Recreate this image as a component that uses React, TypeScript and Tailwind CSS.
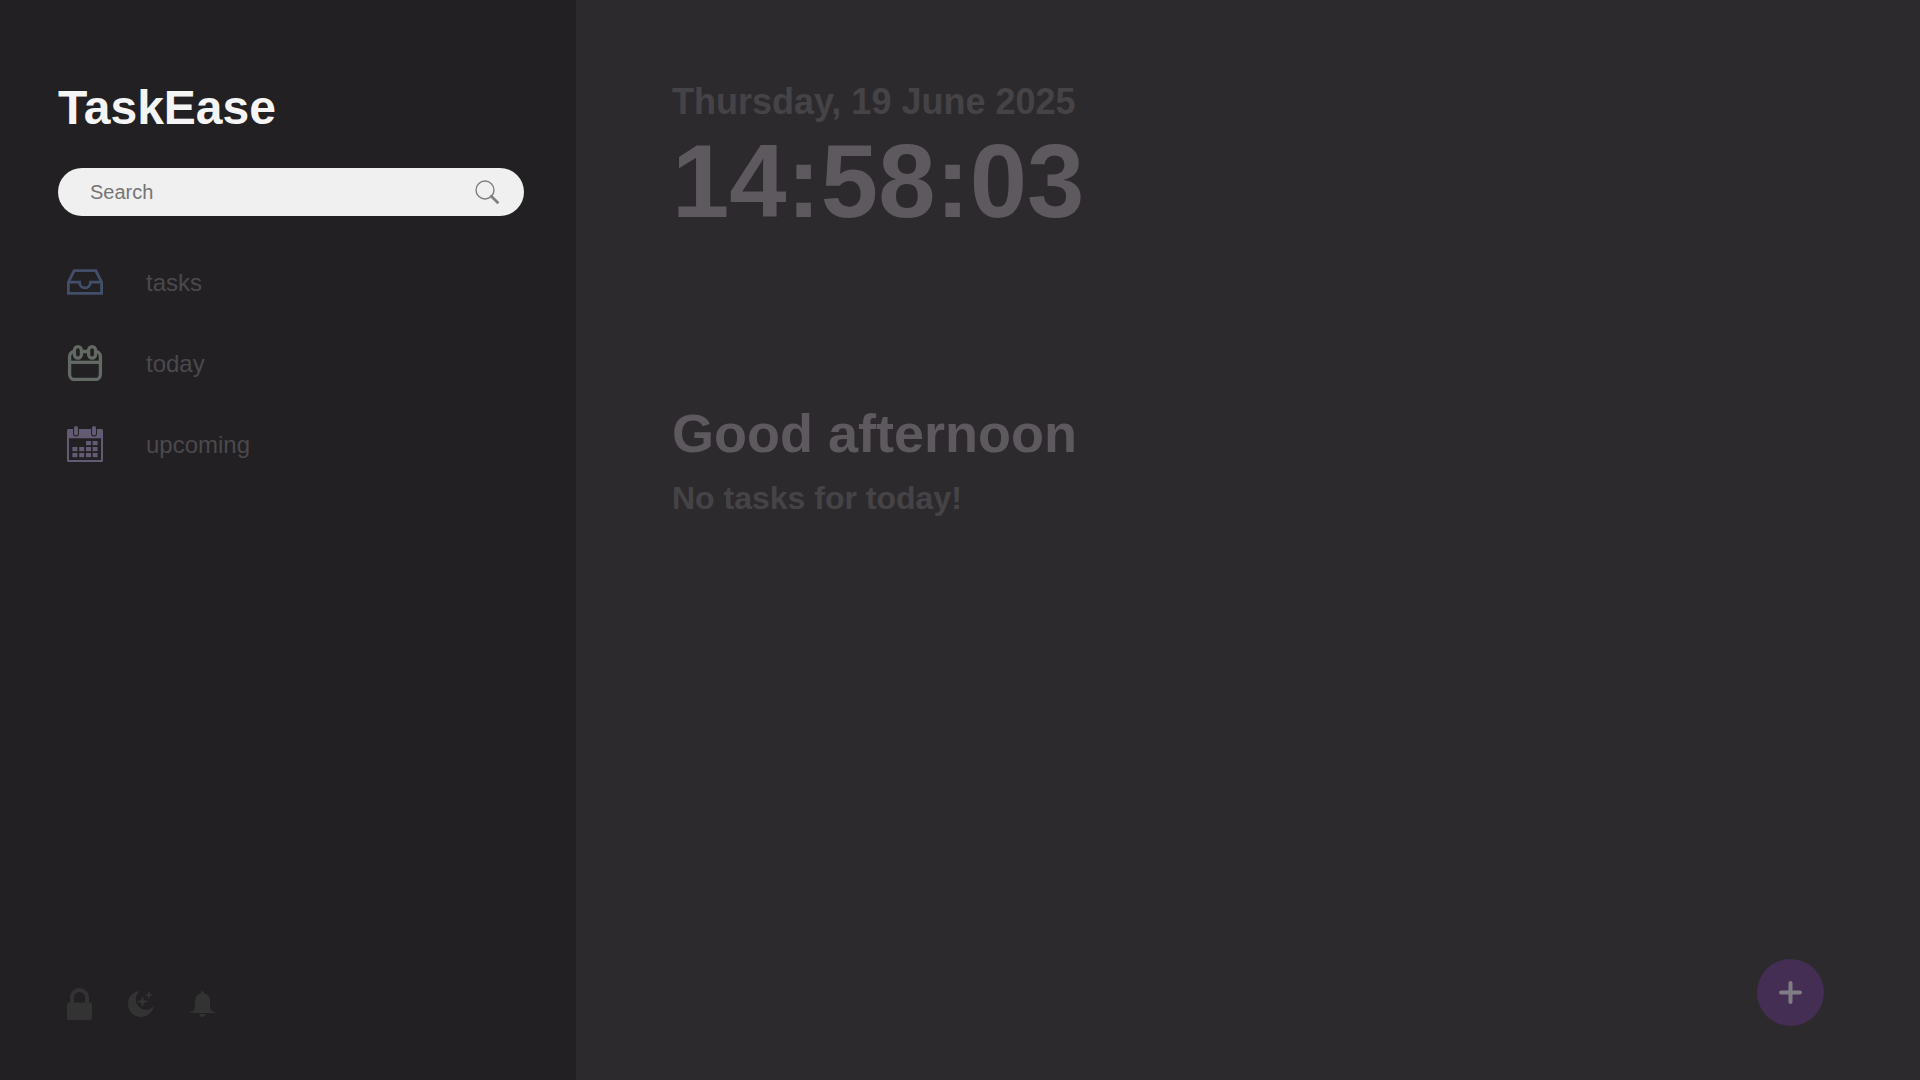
import React from "react";

function TasksIcon() {
  return (
    <svg viewBox="0 0 36 36" className="size-9 text-[#434e69]" fill="none" stroke="currentColor" strokeWidth="2.8" aria-hidden="true">
      <path d="M1.4 29.4V18.2L7.2 6.6H28.8L34.6 18.2V29.4Z" />
      <path d="M1.4 18.2H12.6C12.6 21.6 14.8 23.9 18 23.9S23.4 21.6 23.4 18.2H34.6" />
    </svg>
  );
}

function TodayIcon() {
  return (
    <svg viewBox="0 0 36 36" className="size-9 text-[#626a63]" fill="none" stroke="currentColor" strokeWidth="3.3" aria-hidden="true">
      <rect x="2.6" y="6.5" width="30.8" height="28" rx="5" />
      <path d="M2.6 17.3H33.4" />
      <rect x="7.400" y="1.700" width="7" height="11.400" rx="3.500" fill="#222023" />
      <rect x="21.600" y="1.700" width="7" height="11.400" rx="3.500" fill="#222023" />
    </svg>
  );
}

function UpcomingIcon() {
  const cells = [
    [19, 15], [25.6, 15],
    [5.4, 21], [12.2, 21], [19, 21], [25.6, 21],
    [5.4, 27], [12.2, 27], [19, 27], [25.6, 27],
  ];
  return (
    <svg viewBox="0 0 36 36" className="size-9 text-[#635a73]" fill="currentColor" aria-hidden="true">
      <path fillRule="evenodd" d="M1.5 3H34.5Q36 3 36 4.5V34.5Q36 36 34.5 36H1.5Q0 36 0 34.5V4.5Q0 3 1.5 3ZM2 12.2V34H34V12.2Z" />
      <rect x="6" y="-1" width="6" height="11.4" rx="3" fill="#222023" />
      <rect x="24" y="-1" width="6" height="11.4" rx="3" fill="#222023" />
      <rect x="7" y="0" width="4" height="9.4" rx="2" />
      <rect x="25" y="0" width="4" height="9.4" rx="2" />
      {cells.map(([x, y]) => (
        <rect key={`${x}-${y}`} x={x} y={y} width="5" height="4.2" />
      ))}
    </svg>
  );
}

function SearchIcon() {
  return (
    <svg viewBox="0 0 24 24" className="size-6" fill="none" stroke="#7f7f7f" aria-hidden="true">
      <circle cx="10" cy="10" r="9" strokeWidth="1.4" />
      <path d="M16.3 16.3L22.6 22.4" strokeWidth="2.8" strokeLinecap="round" />
    </svg>
  );
}

function LockIcon() {
  return (
    <svg viewBox="0 0 25 32" className="h-8 w-[25px]" aria-hidden="true">
      <path d="M5 16V9.3A7.5 7.3 0 0 1 20 9.3V16" fill="none" stroke="currentColor" strokeWidth="4" />
      <rect y="14.4" width="25" height="17.6" rx="2" fill="currentColor" />
    </svg>
  );
}

function MoonIcon() {
  return (
    <svg viewBox="0 0 26 26" className="size-[26px]" fill="currentColor" aria-hidden="true">
      <path d="M11.8 0C5 .4 0 6 0 13a13 13 0 0 0 13 13c6.300 0 11.600-4.600 13-11.500C23.600 17.800 20.600 19 17.300 18.700C12 18.300 8 14 7.800 8.800C7.700 5.200 9.200 2.200 11.800 0Z" />
      <path d="M14.500 4.800L16.100 8.900L20.200 10.500L16.100 12.100L14.500 16.200L12.900 12.100L8.800 10.500L12.900 8.900Z" />
      <path d="M20.800 -.3L22 2.700L25 3.900L22 5.100L20.800 8.100L19.600 5.100L16.600 3.900L19.600 2.700Z" />
    </svg>
  );
}

function BellIcon() {
  return (
    <svg viewBox="0 0 25 26" className="h-[26px] w-[25px]" fill="currentColor" aria-hidden="true">
      <path d="M12.500 0C13.500 0 14 .8 14 2.200C18 3 20 6.200 20 10V15C20 18.500 21.500 20.600 25 21.300V22H0V21.300C3.500 20.600 5 18.500 5 15V10C5 6.200 7 3 11 2.200C11 .8 11.500 0 12.500 0Z" />
      <path d="M9.700 23H15.300C15.300 25 14.200 26 12.500 26S9.700 25 9.700 23Z" />
    </svg>
  );
}

const links = [
  { label: "tasks", icon: <TasksIcon /> },
  { label: "today", icon: <TodayIcon /> },
  { label: "upcoming", icon: <UpcomingIcon /> },
];

export default function App() {
  return (
    <div className="flex min-h-screen bg-[#2d2a2d] font-['Liberation_Sans',Arial,sans-serif]">
      <aside className="flex w-[30%] flex-col bg-[#222023] pt-20 pr-[52px] pb-[60px] pl-[58px]">
        <h1 className="text-5xl leading-14 font-bold text-[#f5f5f5]">TaskEase</h1>

        <form role="search" className="mt-8 flex h-12 items-center rounded-3xl bg-[#f0f0f0] pr-[25px] pl-8">
          <input
            type="search"
            aria-label="Search"
            placeholder="Search"
            className="min-w-0 flex-1 bg-transparent text-xl leading-6 text-[#333] outline-none placeholder:text-[#757575]"
          />
          <button type="button" aria-label="Submit search">
            <SearchIcon />
          </button>
        </form>

        <nav className="mt-12 flex flex-col gap-[45px] pl-[9px]">
          {links.map(({ label, icon }) => (
            <a key={label} href={`#${label}`} className="flex h-9 items-center gap-[43px] text-2xl text-[#4b494c]">
              {icon}
              <span className="pt-0.5">{label}</span>
            </a>
          ))}
        </nav>

        <div className="mt-auto flex items-center gap-9 pl-[9px] text-[#333333]">
          <button type="button" aria-label="Lock"><LockIcon /></button>
          <button type="button" aria-label="Dark mode"><MoonIcon /></button>
          <button type="button" aria-label="Notifications"><BellIcon /></button>
        </div>
      </aside>

      <main className="flex flex-1 flex-col px-24 pt-20 pb-[54px] font-bold">
        <p className="text-[36px] leading-[44px] text-[#464347]">Thursday, 19 June 2025</p>
        <time dateTime="14:58:03" className="mt-1.5 text-[103px] leading-[104px] text-[#5d595e]">14:58:03</time>
        <h2 className="mt-[169px] text-[54px] leading-[60px] text-[#5d595e]">Good afternoon</h2>
        <p className="mt-[15px] text-[32px] leading-10 text-[#464347]">No tasks for today!</p>

        <button
          type="button"
          aria-label="Add task"
          className="mt-auto flex size-[67px] items-center justify-center self-end rounded-full bg-[#442e54]"
        >
          <svg viewBox="0 0 23 23" className="size-[23px]" fill="none" stroke="#807c84" strokeWidth="4" strokeLinecap="round" aria-hidden="true">
            <path d="M11.500 2V21M2 11.500H21" />
          </svg>
        </button>
      </main>
    </div>
  );
}
